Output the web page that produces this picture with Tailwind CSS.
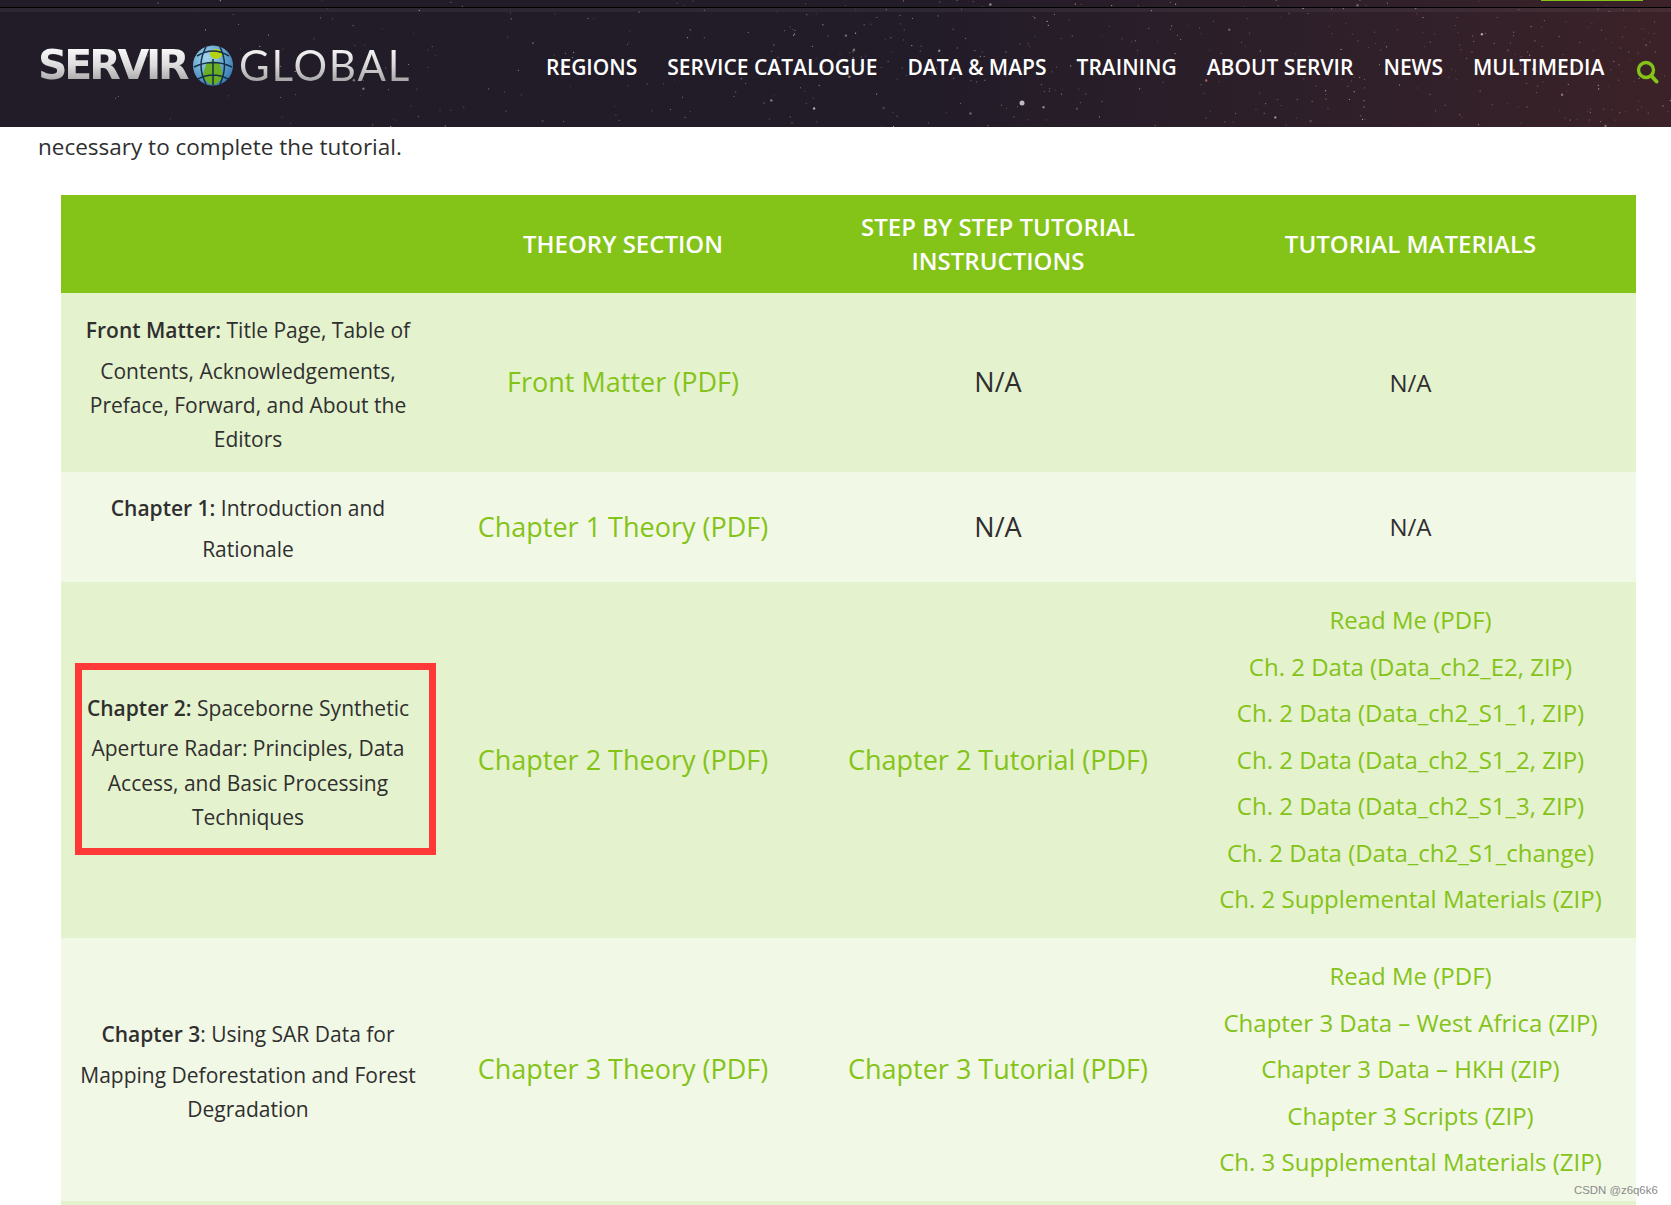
<!DOCTYPE html>
<html lang="en">
<head>
  <meta charset="UTF-8" />
  <title>SERVIR Global</title>
  <script src="https://cdn.jsdelivr.net/npm/@tailwindcss/browser@4"></script>
</head>
<body class="bg-white font-['Open_Sans',sans-serif] text-[#2f2f2f] h-[1205px] overflow-hidden relative">

  <!-- header -->
  <header class="relative h-[127px] bg-[#221c28] overflow-hidden">
    <div class="absolute inset-0 bg-gradient-to-r from-transparent from-55% via-[#31202a] via-85% to-[#3c2228]"></div>
    <svg id="stars" class="absolute inset-0" width="1671" height="127"></svg>
    <div class="absolute left-[1541px] top-0 w-[102px] h-px bg-[#84c318]"></div>
    <div class="absolute left-0 right-0 top-[7px] h-px bg-black"></div>
    <div class="absolute left-0 right-0 top-[8px] h-[4px] bg-white/5"></div>

    <div class="relative h-full flex items-center pl-[38px] pt-[7px]">
      <a class="flex items-center w-[375px] h-[45px] shrink-0 mb-[4px]">
        <span class="w-[154px] shrink-0 font-['DejaVu_Sans',sans-serif] font-bold text-[41px] leading-none tracking-[-3.2px] text-transparent bg-clip-text bg-gradient-to-b from-white via-[#dcdcdc] to-[#98989a]">SERVIR</span>
        <svg class="shrink-0" width="42" height="45" viewBox="0 0 42 45">
          <defs>
            <radialGradient id="globeBlue" cx="0.35" cy="0.3" r="0.8">
              <stop offset="0" stop-color="#a5d6ee" />
              <stop offset="1" stop-color="#2f78b0" />
            </radialGradient>
          </defs>
          <circle cx="21" cy="22.5" r="20" fill="url(#globeBlue)" />
          <path d="M14 21 Q21 15 28 21 L31 33 Q28 40 21 42 Q14 40 11 33 Z" fill="#6aae22" />
          <ellipse cx="24" cy="11" rx="6" ry="5" fill="#b6d214" />
          <path d="M5 13 Q21 3 37 13 M2 24 Q21 15 40 24 M6 36 Q21 28 36 36 M14 4 Q4 22 14 41 M28 4 Q37 22 28 41 M21 16 V42" fill="none" stroke="#16304a" stroke-width="1.5" />
        </svg>
        <span class="ml-[5px] font-['Lato',sans-serif] font-normal text-[42px] leading-none tracking-[1.8px] text-transparent bg-clip-text bg-gradient-to-b from-white via-[#d8d8d8] to-[#98989a]">GLOBAL</span>
      </a>
      <nav class="ml-[133px] mt-[2px] flex items-center gap-[30px] text-[21px] font-semibold text-white whitespace-nowrap">
        <a>REGIONS</a>
        <a>SERVICE CATALOGUE</a>
        <a>DATA &amp; MAPS</a>
        <a>TRAINING</a>
        <a>ABOUT SERVIR</a>
        <a>NEWS</a>
        <a>MULTIMEDIA</a>
      </nav>
      <svg class="absolute left-[1636px] top-[60px]" width="23" height="24" viewBox="0 0 23 24" fill="none" stroke="#84c318">
        <circle cx="10" cy="10" r="7.5" stroke-width="3.4" />
        <path d="M15.5 16 L20.5 21.5" stroke-width="4" stroke-linecap="round" />
      </svg>
    </div>
  </header>

  <p class="pl-[38px] h-[68px] pt-[3px] text-[22.5px] leading-[34px]">necessary to complete the tutorial.</p>

  <table class="ml-[61px] w-[1575px] table-fixed border-collapse text-center">
    <colgroup>
      <col class="w-[374px]" /><col class="w-[376px]" /><col class="w-[374px]" /><col class="w-[451px]" />
    </colgroup>
    <thead>
      <tr class="h-[98px] bg-[#84c318] text-white text-[24px] leading-[34px] font-semibold">
        <th class="font-semibold"></th>
        <th class="font-semibold">THEORY SECTION</th>
        <th class="font-semibold">STEP BY STEP TUTORIAL<br />INSTRUCTIONS</th>
        <th class="font-semibold">TUTORIAL MATERIALS</th>
      </tr>
    </thead>
    <tbody>
      <tr class="h-[179px] bg-[#e5f2ce]">
        <td class="px-[16px] pt-[5px] text-[21px] leading-[34.4px]"><p class="mb-[6px]"><strong class="font-semibold">Front Matter:</strong> Title Page, Table of</p>Contents, Acknowledgements, Preface, Forward, and About the Editors</td>
        <td class="text-[27px] text-[#84c318]">Front Matter (PDF)</td>
        <td class="text-[27px]">N/A</td>
        <td class="text-[24px]">N/A</td>
      </tr>
      <tr class="h-[110px] bg-[#f2f8e6]">
        <td class="px-[16px] pt-[3px] text-[21px] leading-[34.4px]"><p class="mb-[6px]"><strong class="font-semibold">Chapter 1:</strong> Introduction and</p>Rationale</td>
        <td class="text-[27px] text-[#84c318]">Chapter 1 Theory (PDF)</td>
        <td class="text-[27px]">N/A</td>
        <td class="text-[24px]">N/A</td>
      </tr>
      <tr class="h-[356px] bg-[#e5f2ce]">
        <td class="px-[16px] pt-[5px] text-[21px] leading-[34.4px]"><p class="mb-[6px]"><strong class="font-semibold">Chapter 2:</strong> Spaceborne Synthetic</p>Aperture Radar: Principles, Data Access, and Basic Processing Techniques</td>
        <td class="text-[27px] text-[#84c318]">Chapter 2 Theory (PDF)</td>
        <td class="text-[27px] text-[#84c318]">Chapter 2 Tutorial (PDF)</td>
        <td class="text-[24px] leading-[46.6px] text-[#84c318]">
          <p>Read Me (PDF)</p>
          <p>Ch. 2 Data (Data_ch2_E2, ZIP)</p>
          <p>Ch. 2 Data (Data_ch2_S1_1, ZIP)</p>
          <p>Ch. 2 Data (Data_ch2_S1_2, ZIP)</p>
          <p>Ch. 2 Data (Data_ch2_S1_3, ZIP)</p>
          <p>Ch. 2 Data (Data_ch2_S1_change)</p>
          <p>Ch. 2 Supplemental Materials (ZIP)</p>
        </td>
      </tr>
      <tr class="h-[263px] bg-[#f2f8e6]">
        <td class="px-[16px] pt-[5px] text-[21px] leading-[34.4px]"><p class="mb-[6px]"><strong class="font-semibold">Chapter 3</strong>: Using SAR Data for</p>Mapping Deforestation and Forest Degradation</td>
        <td class="text-[27px] text-[#84c318]">Chapter 3 Theory (PDF)</td>
        <td class="text-[27px] text-[#84c318]">Chapter 3 Tutorial (PDF)</td>
        <td class="text-[24px] leading-[46.6px] text-[#84c318]">
          <p>Read Me (PDF)</p>
          <p>Chapter 3 Data – West Africa (ZIP)</p>
          <p>Chapter 3 Data – HKH (ZIP)</p>
          <p>Chapter 3 Scripts (ZIP)</p>
          <p>Ch. 3 Supplemental Materials (ZIP)</p>
        </td>
      </tr>
      <tr class="h-[4px] bg-[#e5f2ce]"><td colspan="4"></td></tr>
    </tbody>
  </table>

  <!-- annotation drawn over the screenshot -->
  <div class="absolute left-[75px] top-[663px] w-[361px] h-[192px] border-[7px] border-[#ff3838]"></div>
  <span class="absolute left-[1574px] top-[1183px] font-['Liberation_Sans',sans-serif] text-[11.4px] leading-[14px] text-[#8a8a8a]">CSDN @z6q6k6</span>

  <script>
    // star field for the header, seeded so every render is the same
    const svg = document.getElementById("stars");
    let seed = 12345;
    function rnd() {
      seed = (seed * 16807) % 2147483647;
      return seed / 2147483647;
    }
    const colors = ["#ffffff", "#c9c9b8", "#d9a090", "#a8b890", "#e08070"];
    let out = "";
    for (let i = 0; i < 520; i++) {
      const x = Math.pow(rnd(), 0.6) * 1671;
      const y = rnd() * 127;
      const r = rnd() < 0.06 ? 1.2 : 0.6;
      const c = x > 1000 ? colors[Math.floor(rnd() * 5)] : colors[Math.floor(rnd() * 4)];
      out += `<circle cx="${x.toFixed(1)}" cy="${y.toFixed(1)}" r="${r}" fill="${c}" opacity="${(0.2 + rnd() * 0.5).toFixed(2)}"/>`;
    }
    out += `<circle cx="1022" cy="103" r="2.5" fill="#fff" opacity="0.7"/>`;
    svg.innerHTML = out;
  </script>
</body>
</html>
